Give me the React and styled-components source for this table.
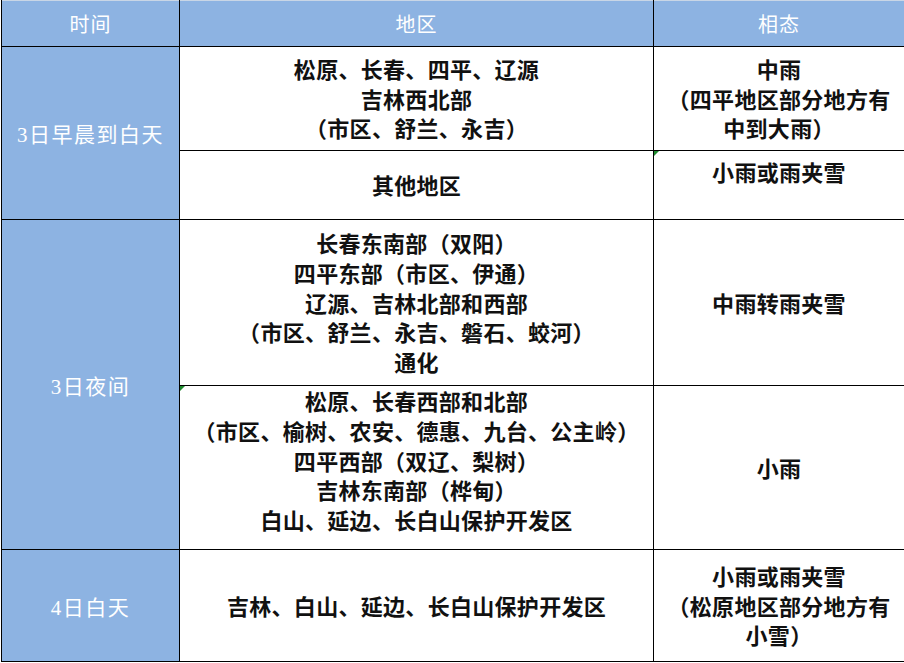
import React from "react";
import styled, { createGlobalStyle } from "styled-components";

const GlobalStyle = createGlobalStyle`
  html, body {
    margin: 0;
    padding: 0;
    background: #ffffff;
  }
  body {
    font-family: "Liberation Serif", "Noto Sans CJK SC", serif;
  }
`;

const Page = styled.div`
  padding: 0 0 0 1px;
`;

const Table = styled.table`
  border-collapse: collapse;
  table-layout: fixed;
  width: 903px;
  border-top: 1px solid #c9d6e6;
`;

const HeadCell = styled.th`
  background: #8db3e2;
  color: #ffffff;
  font-weight: 400;
  font-size: 20px;
  letter-spacing: 1px;
  height: 45px;
  padding: 0;
  border: 1px solid #000;
  border-top: none;
  text-align: center;
  vertical-align: middle;
`;

const TimeCell = styled.td`
  background: #8db3e2;
  color: #ffffff;
  font-size: 21px;
  letter-spacing: 1.5px;
  text-align: center;
  vertical-align: middle;
  padding: 0;
  border: 1px solid #000;
`;

const Cell = styled.td`
  position: relative;
  color: #111;
  font-family: "Noto Sans CJK SC", "Liberation Serif", serif;
  font-weight: 700;
  font-size: 22px;
  letter-spacing: 0.3px;
  line-height: 29.7px;
  text-align: center;
  vertical-align: ${(p) => (p.$top ? "top" : "middle")};
  padding: ${(p) => (p.$top ? "6px 0 0" : p.$lift ? "0 0 14px" : "0")};
  border: 1px solid #000;

  &::before {
    content: "";
    display: ${(p) => (p.$mark ? "block" : "none")};
    position: absolute;
    left: 0;
    top: 0;
    border-top: 5px solid #1e8a2e;
    border-right: 5px solid transparent;
  }
`;

const Line = styled.div`
  white-space: nowrap;
`;

const rows = [
  {
    time: "3日早晨到白天",
    parts: [
      {
        h: 104,
        area: ["松原、长春、四平、辽源", "吉林西北部", "（市区、舒兰、永吉）"],
        state: ["中雨", "（四平地区部分地方有", "中到大雨）"],
      },
      { h: 69, area: ["其他地区"], state: ["小雨或雨夹雪"], top: true, mark: true },
    ],
  },
  {
    time: "3日夜间",
    parts: [
      {
        h: 166,
        area: [
          "长春东南部（双阳）",
          "四平东部（市区、伊通）",
          "辽源、吉林北部和西部",
          "（市区、舒兰、永吉、磐石、蛟河）",
          "通化",
        ],
        state: ["中雨转雨夹雪"],
      },
      {
        h: 164,
        area: [
          "松原、长春西部和北部",
          "（市区、榆树、农安、德惠、九台、公主岭）",
          "四平西部（双辽、梨树）",
          "吉林东南部（桦甸）",
          "白山、延边、长白山保护开发区",
        ],
        state: ["小雨"],
        areaMark: true,
        lift: true,
      },
    ],
  },
  {
    time: "4日白天",
    parts: [
      {
        h: 112,
        area: ["吉林、白山、延边、长白山保护开发区"],
        state: ["小雨或雨夹雪", "（松原地区部分地方有", "小雪）"],
      },
    ],
  },
];

export default function App() {
  return (
    <Page>
      <GlobalStyle />
      <Table>
        <colgroup>
          <col style={{ width: 178 }} />
          <col style={{ width: 474 }} />
          <col style={{ width: 251 }} />
        </colgroup>
        <thead>
          <tr>
            <HeadCell>时间</HeadCell>
            <HeadCell>地区</HeadCell>
            <HeadCell>相态</HeadCell>
          </tr>
        </thead>
        <tbody>
          {rows.map((row) =>
            row.parts.map((part, i) => (
              <tr key={row.time + i} style={{ height: part.h }}>
                {i === 0 && <TimeCell rowSpan={row.parts.length}>{row.time}</TimeCell>}
                <Cell $mark={part.areaMark} $lift={part.lift}>
                  {part.area.map((t) => (
                    <Line key={t}>{t}</Line>
                  ))}
                </Cell>
                <Cell $top={part.top} $mark={part.mark}>
                  {part.state.map((t) => (
                    <Line key={t}>{t}</Line>
                  ))}
                </Cell>
              </tr>
            ))
          )}
        </tbody>
      </Table>
    </Page>
  );
}
